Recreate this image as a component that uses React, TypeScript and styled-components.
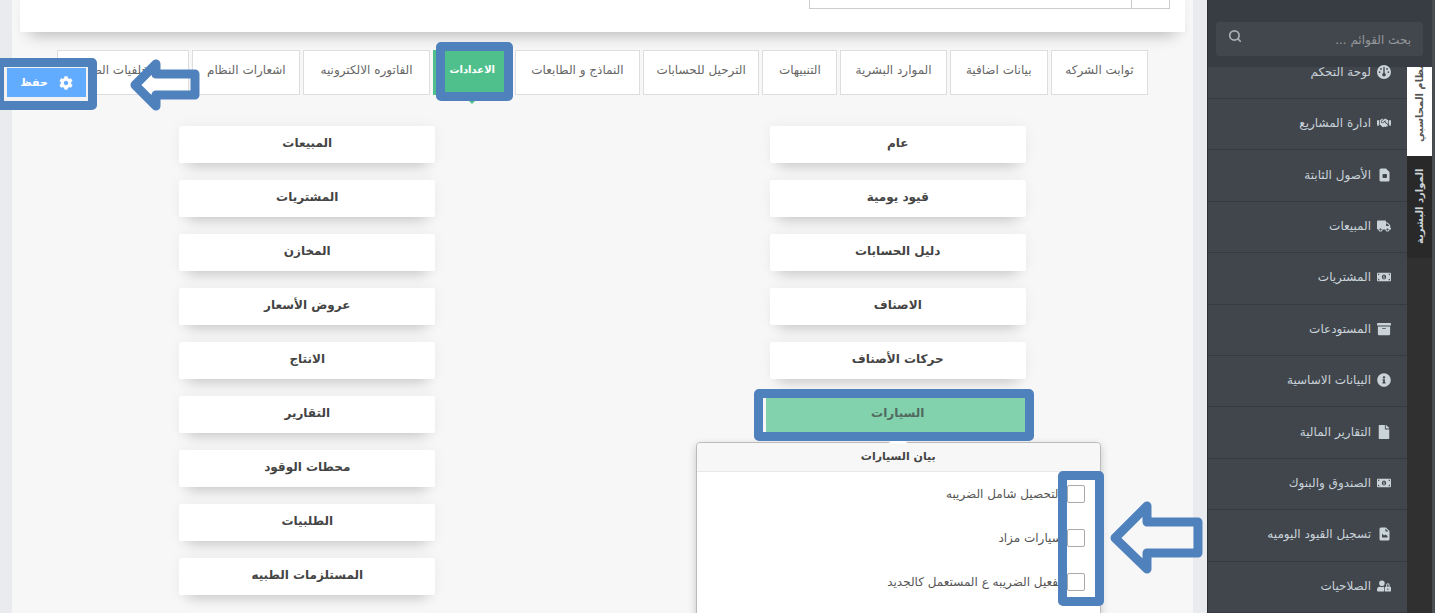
import React from "react";
import styled, { createGlobalStyle, css } from "styled-components";
import {
  FaTruck, FaMoneyBillAlt, FaArchive, FaInfoCircle, FaFile, FaUserLock, FaCog, FaUsers,
} from "react-icons/fa";
import { FaGauge, FaHandshake } from "react-icons/fa6";
import { Search } from "lucide-react";

const blue = "#4f81bd";

const Global = createGlobalStyle`
  * { box-sizing: border-box; }
  body { margin: 0; background: #e9ebee; }
  body, button, input { font-family: "DejaVu Sans", "Noto Sans", sans-serif; }
`;

const Page = styled.div`
  position: relative;
  display: flex;
  height: 100vh;
  overflow: hidden;
  direction: rtl;
`;

const Aside = styled.aside`
  flex: 0 0 228px;
  display: flex;
  flex-direction: column;
  background: #373d43;
  border-right: 3px solid #4a4d50;
  border-left: 1px solid #2b3034;
`;

const SearchBar = styled.div`
  flex: 0 0 67px;
  padding: 22px 9px 11px 8px;
`;

const SearchBox = styled.label`
  display: flex;
  align-items: center;
  height: 34px;
  padding: 0 12px;
  border-radius: 3px;
  background: #42474e;
  color: #a9adb0;
  svg { flex: none; margin-bottom: 6px; }
`;

const SearchInput = styled.input`
  flex: 1;
  min-width: 0;
  padding: 2px 0 0;
  border: 0;
  background: transparent;
  font-size: 12px;
  color: #a9adb0;
  &::placeholder { color: #94989b; opacity: 1; }
`;

const AsideBody = styled.div`
  flex: 1;
  display: flex;
  min-height: 0;
`;

const Rail = styled.div`
  flex: 0 0 25px;
  display: flex;
  flex-direction: column;
  background: #303030;
`;

const RailTab = styled.button<{ $active?: boolean }>`
  display: flex;
  align-items: center;
  justify-content: flex-end;
  height: ${(p) => (p.$active ? 89 : 102)}px;
  padding: 14px 0 0;
  border: 0;
  overflow: hidden;
  writing-mode: vertical-rl;
  transform: rotate(180deg);
  white-space: nowrap;
  font-size: 10px;
  font-weight: bold;
  background: ${(p) => (p.$active ? "#fff" : "#292929")};
  color: ${(p) => (p.$active ? "#555" : "#ccd4d8")};
`;

const Menu = styled.nav`
  flex: 1;
  display: flex;
  flex-direction: column;
  background: #41464d;
`;

const MenuItem = styled.a<{ $first?: boolean }>`
  flex: ${(p) => (p.$first ? "0 0 32px" : "1 0 48px")};
  display: flex;
  align-items: center;
  gap: 5px;
  min-height: 0;
  padding: 0 15px ${(p) => (p.$first ? 21 : 2)}px 8px;
  border-bottom: 1px solid #353b41;
  color: #c9d3d9;
  font-size: 12px;
  line-height: 16px;
  text-decoration: none;
  white-space: nowrap;
`;

const MenuIcon = styled.span`
  display: flex;
  justify-content: center;
  width: 16px;
  font-size: 14px;
`;

const Main = styled.main`
  flex: 1;
  min-width: 0;
  margin: 0 14px 0 12px;
  background: #f7f7f7;
`;

const TopCard = styled.section`
  height: 32px;
  margin: 0 8px;
  padding: 0 15px;
  background: #fff;
  box-shadow: 0 12px 16px -10px rgba(0, 0, 0, 0.3), 0 0 8px rgba(0, 0, 0, 0.04);
`;

const Field = styled.div`
  display: flex;
  width: 361px;
  height: 9px;
  overflow: hidden;
  border: 1px solid #ccc;
  border-top: 0;
`;

const FieldMark = styled.span`
  display: flex;
  align-items: flex-end;
  justify-content: center;
  width: 38px;
  padding-bottom: 7px;
  border-left: 1px solid #ccc;
  color: #999;
  font-size: 12px;
  svg { flex: none; }
`;

const FieldInput = styled.input`
  flex: 1;
  min-width: 0;
  border: 0;
`;

const Tabs = styled.div`
  display: grid;
  grid-template-columns: 97fr 98fr 106fr 75fr 116fr 125fr 79fr 126fr 108fr 132fr;
  gap: 3px;
  margin: 18px 45px 0;
`;

const TabCell = styled.div`
  position: relative;
`;

const Tab = styled.button<{ $active?: boolean }>`
  width: 100%;
  height: 45px;
  padding: 0 0 6px;
  border: 1px solid #ddd;
  background: #fff;
  color: #666;
  font-size: 12px;
  white-space: nowrap;
  ${(p) =>
    p.$active &&
    css`
      border-color: #4fbf8b;
      background: #4fbf8b;
      color: #fff;
      font-weight: bold;
      font-size: 10px;
      &::after {
        content: "";
        position: absolute;
        top: 45px;
        left: 50%;
        margin-left: -9px;
        border: 9px solid transparent;
        border-top-color: #4fbf8b;
      }
    `}
`;

const Callout = styled.span`
  position: absolute;
  z-index: 5;
  border: 9px solid ${blue};
  border-radius: 5px;
  pointer-events: none;
`;

const TabCallout = styled(Callout)`
  inset: -8px -1px -6px 3px;
`;

const PillCallout = styled(Callout)`
  inset: -7px -8px -8px -16px;
`;

const ChecksCallout = styled(Callout)`
  top: 28px;
  right: -4px;
  width: 46px;
  height: 135px;
`;

const Columns = styled.div`
  display: grid;
  grid-template-columns: 1fr 1fr;
  margin-top: 31px;
`;

const Column = styled.div`
  display: flex;
  flex-direction: column;
  align-items: center;
  gap: 17px;
`;

const PillCell = styled.div`
  position: relative;
  width: 256px;
`;

const Pill = styled.button<{ $active?: boolean }>`
  display: block;
  width: 100%;
  height: 37px;
  padding: 0 0 4px;
  border: 0;
  border-radius: 2px;
  background: ${(p) => (p.$active ? "#81d2ad" : "#fff")};
  color: ${(p) => (p.$active ? "#52695f" : "#444")};
  box-shadow: ${(p) =>
    p.$active
      ? "-4px 0 0 #81d2ad"
      : "0 12px 14px -9px rgba(0, 0, 0, 0.18), 0 0 14px rgba(0, 0, 0, 0.05)"};
  font-size: 12px;
  font-weight: bold;
`;

const Popover = styled.div`
  position: absolute;
  z-index: 3;
  top: 46px;
  left: -74px;
  width: 405px;
  height: 200px;
  border: 1px solid #bbb;
  border-radius: 4px;
  background: #fff;
  box-shadow: 0 3px 8px rgba(0, 0, 0, 0.2);
  &::before {
    content: "";
    position: absolute;
    top: -9px;
    left: 50%;
    margin-left: -10px;
    border: 10px solid transparent;
    border-top: 0;
    border-bottom-color: #fff;
  }
`;

const PopoverTitle = styled.h3`
  height: 29px;
  margin: 0;
  border-bottom: 1px solid #e8e8e8;
  border-radius: 4px 4px 0 0;
  background: #f7f7f7;
  color: #444;
  font-size: 11px;
  line-height: 28px;
  text-align: center;
`;

const CheckRow = styled.label`
  display: flex;
  align-items: center;
  gap: 5px;
  height: 44px;
  padding-right: 15px;
  color: #555;
  font-size: 12px;
  white-space: nowrap;
`;

const Check = styled.input`
  appearance: none;
  width: 18px;
  height: 18px;
  margin: 0;
  border: 1px solid #aaa;
  border-radius: 2px;
  background: #fff;
`;

const SaveDock = styled.div`
  position: absolute;
  z-index: 6;
  top: 58px;
  left: -5px;
  padding: 10px 11px 13px 12px;
  background: #f2f2f3;
  border-radius: 5px;
`;

const SaveButton = styled.button`
  display: flex;
  align-items: center;
  justify-content: center;
  gap: 11px;
  width: 79px;
  height: 29px;
  padding: 0;
  border: 0;
  background: #62acff;
  color: #fff;
  font-size: 11px;
  font-weight: bold;
  svg { width: 14px; height: 14px; }
`;

const SaveCallout = styled(Callout)`
  inset: 0;
`;

const ArrowDrawing = styled.svg`
  position: absolute;
  z-index: 7;
  fill: none;
  stroke: ${blue};
  stroke-width: 9;
  stroke-linejoin: round;
`;

const SaveArrow = styled(ArrowDrawing)`
  top: 58px;
  left: 130px;
`;

const ChecksArrow = styled(ArrowDrawing)`
  top: 58px;
  left: 413px;
`;

const AssetFileIcon = () => (
  <svg width="11" height="14" viewBox="0 0 11 14" fill="currentColor" fillRule="evenodd">
    <path d="M2 0.5H7L10.5 4V12a1.5 1.5 0 0 1-1.500 1.500H2A1.500 1.500 0 0 1 .5 12V2A1.500 1.500 0 0 1 2 .5ZM4.500 6a1 1 0 0 0-1 1V9a1 1 0 0 0 1 1H7a1 1 0 0 0 1-1V7a1 1 0 0 0-1-1Z" />
  </svg>
);

const JournalFileIcon = () => (
  <svg width="11" height="14" viewBox="0 0 11 14" fill="currentColor" fillRule="evenodd">
    <path d="M2 0.5H7L10.5 4V12a1.500 1.500 0 0 1-1.500 1.500H2A1.500 1.500 0 0 1 .5 12V2A1.500 1.500 0 0 1 2 .5ZM3 6.500V10.500H8.500V9L6.500 7.500L5 8.500ZM6.500 1.500V4.500H9.500Z" />
  </svg>
);

const menu = [
  { label: "لوحة التحكم", Icon: FaGauge },
  { label: "ادارة المشاريع", Icon: FaHandshake },
  { label: "الأصول الثابتة", Icon: AssetFileIcon },
  { label: "المبيعات", Icon: FaTruck },
  { label: "المشتريات", Icon: FaMoneyBillAlt },
  { label: "المستودعات", Icon: FaArchive },
  { label: "البيانات الاساسية", Icon: FaInfoCircle },
  { label: "التقارير المالية", Icon: FaFile },
  { label: "الصندوق والبنوك", Icon: FaMoneyBillAlt },
  { label: "تسجيل القيود اليوميه", Icon: JournalFileIcon },
  { label: "الصلاحيات", Icon: FaUserLock },
];

const tabs = [
  "ثوابت الشركه", "بيانات اضافية", "الموارد البشرية", "التنبيهات", "الترحيل للحسابات",
  "النماذج و الطابعات", "الاعدادات", "الفاتوره الالكترونيه", "اشعارات النظام", "صور خلفيات الصفحه",
];

const rightPills = ["عام", "قيود يومية", "دليل الحسابات", "الاصناف", "حركات الأصناف", "السيارات"];
const leftPills = [
  "المبيعات", "المشتريات", "المخازن", "عروض الأسعار", "الانتاج",
  "التقارير", "محطات الوقود", "الطلبيات", "المستلزمات الطبيه",
];
const options = ["التحصيل شامل الضريبه", "سيارات مزاد", "تفعيل الضريبه ع المستعمل كالجديد"];

function CarsPopover() {
  return (
    <Popover>
      <PopoverTitle>بيان السيارات</PopoverTitle>
      {options.map((o) => (
        <CheckRow key={o}>
          <Check type="checkbox" />
          {o}
        </CheckRow>
      ))}
      <ChecksCallout />
      <ChecksArrow width="94" height="74" viewBox="0 0 94 74">
        <path d="M5 37 L37 5 V21 H88 V52 H37 V68 Z" />
      </ChecksArrow>
    </Popover>
  );
}

export default function App() {
  return (
    <Page>
      <Global />
      <Aside>
        <SearchBar>
          <SearchBox>
            <SearchInput type="text" placeholder="بحث القوائم ..." aria-label="بحث القوائم" />
            <Search size={14} strokeWidth={3} />
          </SearchBox>
        </SearchBar>
        <AsideBody>
          <Rail>
            <RailTab $active>النظام المحاسبي</RailTab>
            <RailTab>الموارد البشرية</RailTab>
          </Rail>
          <Menu>
            {menu.map(({ label, Icon }, i) => (
              <MenuItem key={label} href="#" $first={i === 0}>
                <MenuIcon><Icon /></MenuIcon>
                {label}
              </MenuItem>
            ))}
          </Menu>
        </AsideBody>
      </Aside>
      <Main>
        <TopCard>
          <Field>
            <FieldMark><FaUsers /></FieldMark>
            <FieldInput type="text" aria-label="الشركة" />
          </Field>
        </TopCard>
        <Tabs>
          {tabs.map((t) => {
            const active = t === "الاعدادات";
            return (
              <TabCell key={t}>
                <Tab $active={active}>{t}</Tab>
                {active && <TabCallout />}
              </TabCell>
            );
          })}
        </Tabs>
        <Columns>
          <Column>
            {rightPills.map((p) => {
              const active = p === "السيارات";
              return (
                <PillCell key={p}>
                  <Pill $active={active}>{p}</Pill>
                  {active && <PillCallout />}
                  {active && <CarsPopover />}
                </PillCell>
              );
            })}
          </Column>
          <Column>
            {leftPills.map((p) => (
              <PillCell key={p}>
                <Pill>{p}</Pill>
              </PillCell>
            ))}
          </Column>
        </Columns>
      </Main>
      <SaveDock>
        <SaveButton>
          <FaCog />
          حفظ
        </SaveButton>
        <SaveCallout />
      </SaveDock>
      <SaveArrow width="70" height="54" viewBox="0 0 70 54">
        <path d="M5 27 L26 6 V16 H65 V37 H26 V48 Z" />
      </SaveArrow>
    </Page>
  );
}
